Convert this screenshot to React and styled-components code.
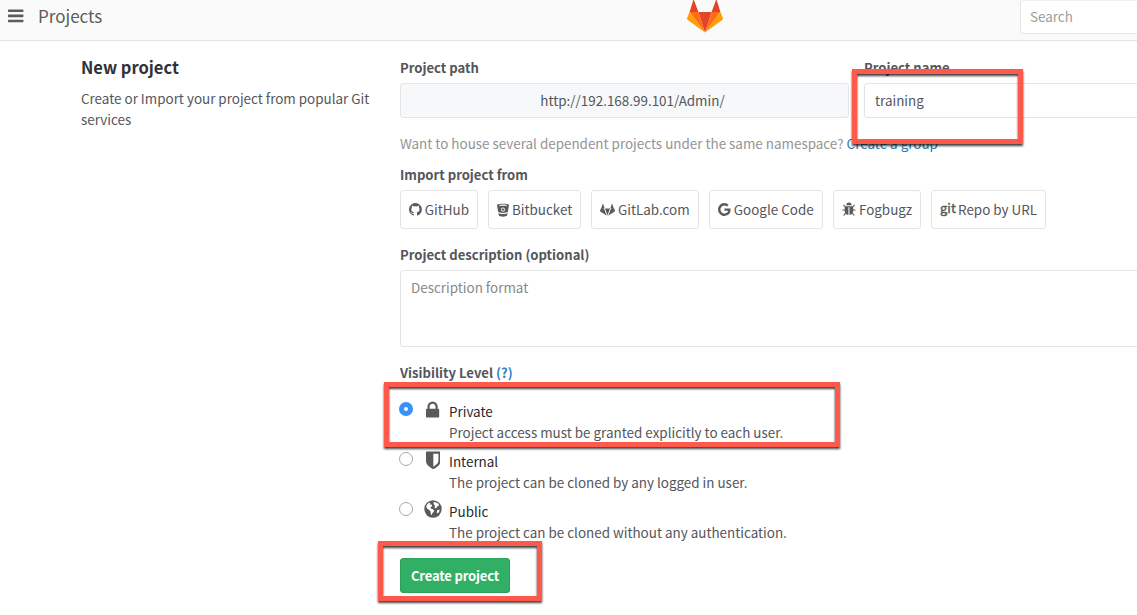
import React from 'react';
import styled, { createGlobalStyle } from 'styled-components';

const GlobalStyle = createGlobalStyle`
  * { box-sizing: border-box; }
  body {
    margin: 0;
    background: #fff;
    color: #54565b;
    font-family: "Noto Sans CJK SC", "Noto Sans", sans-serif;
    font-size: 13.43px;
    line-height: 21px;
    overflow: hidden;
  }
`;

const Page = styled.div`
  position: relative;
  width: 100%;
  height: 615px;
  overflow: hidden;
`;

const Header = styled.header`
  display: grid;
  grid-template-columns: 687px 333px 1fr;
  height: 41px;
  background: #fafafa;
  border-bottom: 1px solid #e3e3e3;
`;

const HeaderTitle = styled.div`
  display: flex;
  align-items: center;
  gap: 14px;
  height: 31px;
  padding-left: 8px;
  font-size: 17px;
  color: #5c5c5c;
`;

const SearchBox = styled.div`
  width: 240px;
  height: 34px;
  padding: 5px 9px;
  border: 1px solid #e5e5e5;
  border-top-color: #f0f0f0;
  border-radius: 3px;
  background: #fff;
  color: #9c9c9c;
`;

const Content = styled.main`
  display: grid;
  grid-template-columns: 304px 913px;
  gap: 15px;
  padding: 16px 0 0 81px;
`;

const Intro = styled.section`
  margin-top: -1px;
  h1 {
    margin: 0 0 10px;
    font-size: 16.5px;
    line-height: 22px;
    font-weight: 700;
    color: #313236;
  }
  p { margin: 0; }
`;

const FieldRow = styled.div`
  display: grid;
  grid-template-columns: 449px 449px;
  gap: 15px;
`;

const Label = styled.div`
  height: 26px;
  font-weight: 700;
  font-size: 13.08px;
  a { color: #3084bb; }
`;

const VisibilityLabel = styled(Label)`
  height: 24px;
  margin-top: 15px;
`;

const Field = styled.div`
  height: ${(p) => p.$height || 35}px;
  padding: 6px 10px;
  border: 1px solid #e5e5e5;
  border-radius: 3px;
  background: ${(p) => (p.$addon ? '#f7f8fa' : '#fff')};
  text-align: ${(p) => (p.$addon ? 'center' : 'left')};
  color: ${(p) => (p.$placeholder ? '#888' : '#54565b')};
  padding-left: ${(p) => (p.$addon ? 26 : 10)}px;
`;

const Hint = styled.p`
  margin: 15px 0 10px;
  color: #949494;
  a { color: #2478b4; }
`;

const ImportButtons = styled.div`
  display: flex;
  gap: 10px;
  margin-bottom: 15px;
`;

const ImportButton = styled.div`
  display: flex;
  align-items: center;
  gap: 3px;
  width: ${(p) => p.$width}px;
  height: 39px;
  padding-left: 8px;
  border: 1px solid #e5e5e5;
  border-radius: 3px;
  white-space: nowrap;
`;

const GitMark = styled.span`
  width: 15px;
  font-size: 13px;
  font-weight: 400;
  -webkit-text-stroke: 0.4px #5a5a5c;
  line-height: 16px;
  margin-top: -3px;
`;

const Levels = styled.div`
  display: grid;
  grid-auto-rows: 50px;
  padding-top: 13px;
`;

const Level = styled.div`
  display: grid;
  grid-template-columns: 24px 25px 1fr;
`;

const Radio = styled.span`
  width: 14px;
  height: 14px;
  margin-left: -1px;
  margin-top: 3px;
  border-radius: 50%;
  background: #fff;
  border: ${(p) => (p.$checked ? '5px solid #3693fb' : '1px solid #a8a8a8')};
`;

const LevelTitle = styled.div`
  padding-top: 2px;
  color: #292a2d;
`;

const LevelIcon = styled.span`
  display: flex;
  justify-content: center;
  width: 18px;
  height: 20px;
  padding-top: 1px;
`;

const SubmitButton = styled.div`
  width: 110px;
  height: 35px;
  margin-top: 9px;
  border: 1px solid #2ca05b;
  border-radius: 3px;
  background: #31af64;
  color: #fff;
  font-size: 13.08px;
  font-weight: 700;
  letter-spacing: -0.2px;
  line-height: 34px;
  text-align: center;
`;

const Highlight = styled.div`
  position: absolute;
  left: ${(p) => p.$x}px;
  top: ${(p) => p.$y}px;
  width: ${(p) => p.$w}px;
  height: ${(p) => p.$h}px;
  border: 5px solid #ff594b;
  filter: drop-shadow(0 2px 1px rgba(0, 0, 0, 0.75));
`;

const Svg = styled.svg`
  display: block;
  flex: none;
`;

const GLYPHS = {
  github: [1536, 'M768 1408q209 0 385.5 -103t279.5 -279.5t103 -385.5q0 -251 -146.5 -451.5t-378.5 -277.5q-27 -5 -40 7t-13 30q0 3 .5 76.5t.5 134.5q0 97 -52 142q57 6 102.5 18t94 39t81 66.5t53 105t20.5 150.5q0 119 -79 206q37 91 -8 204q-28 9 -81 -11t-92 -44l-38 -24q-93 26 -192 26t-192 -26q-16 11 -42.5 27t-83.5 38.5t-85 13.5q-45 -113 -8 -204q-79 -87 -79 -206q0 -85 20.5 -150t52.5 -105t80.5 -67t94 -39t102.5 -18q-39 -36 -49 -103q-21 -10 -45 -15t-57 -5t-65.5 21.5t-55.5 62.5q-19 32 -48.5 52t-49.5 24l-20 3q-21 0 -29 -4.5t-5 -11.5t9 -14t13 -12l7 -5q22 -10 43.5 -38t31.5 -51l10 -23q13 -38 44 -61.5t67 -30t69.5 -7t55.5 3.5l23 4q0 -38 .5 -88.5t.5 -54.5q0 -18 -13 -30t-40 -7q-232 77 -378.5 277.5t-146.5 451.5q0 209 103 385.5t279.5 279.5t385.5 103z'],
  google: [1536, 'M768 750h725q12 -67 12 -128q0 -217 -91 -387.5t-259.5 -266.5t-386.5 -96q-157 0 -299 60.5t-245 163.5t-163.5 245t-60.5 299t60.5 299t163.5 245t245 163.5t299 60.5q300 0 515 -201l-209 -201q-123 119 -306 119q-129 0 -238.5 -65t-173.5 -176.5t-64 -243.5t64 -243.5t173.5 -176.5t238.5 -65q87 0 160 24t120 60t82 82t51.5 87t22.5 78h-436v264z'],
  bug: [1664, 'M1632 576q0 -26 -19 -45t-45 -19h-224q0 -171 -67 -290l208 -209q19 -19 19 -45t-19 -45q-18 -19 -45 -19t-45 19l-198 197q-5 -5 -15 -13t-42 -28.5t-65 -36.5t-82 -29t-97 -13v896h-128v-896q-51 0 -101.5 13.5t-87 33t-66 39t-43.5 32.5l-15 14l-183 -207q-20 -21 -48 -21q-24 0 -43 16q-19 18 -20.5 44.5t15.5 46.5l202 227q-58 114 -58 274h-224q-26 0 -45 19t-19 45t19 45t45 19h224v294l-173 173q-19 19 -19 45t19 45t45 19t45 -19l173 -173h844l173 173q19 19 45 19t45 -19t19 -45t-19 -45l-173 -173v-294h224q26 0 45 -19t19 -45zM1152 1152h-640q0 133 93.5 226.5t226.5 93.5t226.5 -93.5t93.5 -226.5z'],
  lock: [1152, 'M320 768h512v192q0 106 -75 181t-181 75t-181 -75t-75 -181v-192zM1152 672v-576q0 -40 -28 -68t-68 -28h-960q-40 0 -68 28t-28 68v576q0 40 28 68t68 28h32v192q0 184 132 316t316 132t316 -132t132 -316v-192h32q40 0 68 -28t28 -68z'],
  shield: [1280, 'M1088 576v640h-448v-1137q119 63 213 137q235 184 235 360zM1280 1344v-768q0 -86 -33.5 -170.5t-83 -150t-118 -127.5t-126.5 -103t-121 -77.5t-89.5 -49.5t-42.5 -20q-12 -6 -26 -6t-26 6q-16 7 -42.5 20t-89.5 49.5t-121 77.5t-126.5 103t-118 127.5t-83 150t-33.5 170.5v768q0 26 19 45t45 19h1152q26 0 45 -19t19 -45z'],
};

function Glyph({ name, size = 15 }) {
  const [advance, d] = GLYPHS[name];
  return (
    <Svg width={(advance / 1792) * size} height={size} viewBox={`0 0 ${advance} 1792`} fill="#5a5a5c">
      <path transform="translate(0 1536) scale(1 -1)" d={d} fillRule="evenodd" />
    </Svg>
  );
}

const Bars = () => (
  <Svg width="16" height="14" viewBox="0 0 16 14" fill="#5c5c5c">
    <rect y="0.5" width="15.4" height="2.6" rx="0.6" />
    <rect y="5.6" width="15.4" height="2.6" rx="0.6" />
    <rect y="10.7" width="15.4" height="2.6" rx="0.6" />
  </Svg>
);

const Logo = () => (
  <Svg width="36" height="33" viewBox="0 0 36 33">
    <path fill="#e24329" d="M6.6-1 2.6 12H11.4L18 32.5 24.6 12H33.4L29.4-1 24.6 12H11.4Z" />
    <path fill="#ff6c13" d="M2.6 12H11.4L18 32.5ZM33.4 12H24.6L18 32.5Z" />
    <path fill="#ff9c0c" d="M2.6 12 .1 18Q-.1 19.2 .8 20L18 32.5ZM33.4 12 35.9 18Q36.1 19.2 35.2 20L18 32.5Z" />
  </Svg>
);

const Bucket = () => (
  <Svg width="12" height="14" viewBox="0 0 12 14">
    <path fill="#5a5a5c" d="M0 1.9C0 .3 12 .3 12 1.9L10.9 8.8C9.6 10.3 2.4 10.3 1.1 8.8ZM1.4 10C3.3 11.3 8.7 11.3 10.6 10L10.1 12.6C9.2 14 2.8 14 1.9 12.6Z" />
    <ellipse cx="6" cy="2.2" rx="4.3" ry=".65" fill="#fff" />
    <circle cx="6" cy="6.6" r="1.65" fill="none" stroke="#fff" strokeWidth=".9" />
    <circle cx="6" cy="6.6" r=".7" fill="#5a5a5c" />
  </Svg>
);

const Fox = () => (
  <Svg width="15" height="13" viewBox="0 0 15 13" fill="#5a5a5c">
    <path d="M2.9 .2 4.6 5.2H1.3ZM12.1 .2 13.7 5.2H10.4ZM4.9 5.5H10.1L7.5 12.8ZM1 5.3 4.2 5.6 6.9 12.8.3 8.4Q-.1 8 0 7.7ZM14 5.3 10.8 5.6 8.1 12.8 14.7 8.4Q15.1 8 15 7.7Z" />
    <path d="M4.4 5.4 7.1 12.6M10.6 5.4 7.9 12.6" stroke="#fff" strokeWidth=".6" />
  </Svg>
);

const Globe = () => (
  <Svg width="18" height="18" viewBox="0 0 18 18">
    <circle cx="9" cy="9" r="8.7" fill="#5a5a5c" />
    <path fill="#fff" d="M3.2 4.2 5.4 2.6 6.4 3.2 5.6 4.6 7.6 4.6 8.2 6 6.4 7.4 6.8 8.6 8.8 9.2 10.2 10.4 9.6 12 8.4 13 7.8 15 6.8 14.2 6.6 11.6 4.6 9.6 3 8.4 2.2 6.6Z" />
    <path fill="#fff" d="M9.4 2 12.2 2.4 14.4 3.8 15.2 5.4 13.6 6 12.8 7.6 11.4 8.4 10.4 7 11 5.4 9.8 4.2ZM13.2 10.2 15.6 9.6 15.2 11.8 13.8 13.6 12.8 12.4Z" />
  </Svg>
);

const imports = [
  { name: 'GitHub', width: 78, icon: <Glyph name="github" /> },
  { name: 'Bitbucket', width: 93, icon: <Bucket /> },
  { name: 'GitLab.com', width: 108, icon: <Fox /> },
  { name: 'Google Code', width: 114, icon: <Glyph name="google" /> },
  { name: 'Fogbugz', width: 88, icon: <Glyph name="bug" /> },
  { name: 'Repo by URL', width: 115, icon: <GitMark>git</GitMark> },
];

const levels = [
  { title: 'Private', text: 'Project access must be granted explicitly to each user.', icon: <Glyph name="lock" size={20.5} />, checked: true },
  { title: 'Internal', text: 'The project can be cloned by any logged in user.', icon: <Glyph name="shield" size={20.5} /> },
  { title: 'Public', text: 'The project can be cloned without any authentication.', icon: <Globe /> },
];

export default function App() {
  return (
    <Page>
      <GlobalStyle />
      <Header>
        <HeaderTitle><Bars />Projects</HeaderTitle>
        <Logo />
        <SearchBox>Search</SearchBox>
      </Header>
      <Content>
        <Intro>
          <h1>New project</h1>
          <p>Create or Import your project from popular Git services</p>
        </Intro>
        <section>
          <FieldRow>
            <div>
              <Label>Project path</Label>
              <Field $addon>http://192.168.99.101/Admin/</Field>
            </div>
            <div>
              <Label>Project name</Label>
              <Field>training</Field>
            </div>
          </FieldRow>
          <Hint>Want to house several dependent projects under the same namespace? <a>Create a group</a></Hint>
          <Label>Import project from</Label>
          <ImportButtons>
            {imports.map((item) => (
              <ImportButton key={item.name} $width={item.width}>{item.icon}<span>{item.name}</span></ImportButton>
            ))}
          </ImportButtons>
          <Label>Project description (optional)</Label>
          <Field $height={77} $placeholder>Description format</Field>
          <VisibilityLabel>Visibility Level <a>(?)</a></VisibilityLabel>
          <Levels>
            {levels.map((level) => (
              <Level key={level.title}>
                <Radio $checked={level.checked} />
                <LevelIcon>{level.icon}</LevelIcon>
                <div>
                  <LevelTitle>{level.title}</LevelTitle>
                  <div>{level.text}</div>
                </div>
              </Level>
            ))}
          </Levels>
          <SubmitButton>Create project</SubmitButton>
        </section>
      </Content>
      <Highlight $x={852} $y={69} $w={171} $h={75} />
      <Highlight $x={384} $y={382} $w={456} $h={65} />
      <Highlight $x={378} $y={541} $w={164} $h={60} />
    </Page>
  );
}
